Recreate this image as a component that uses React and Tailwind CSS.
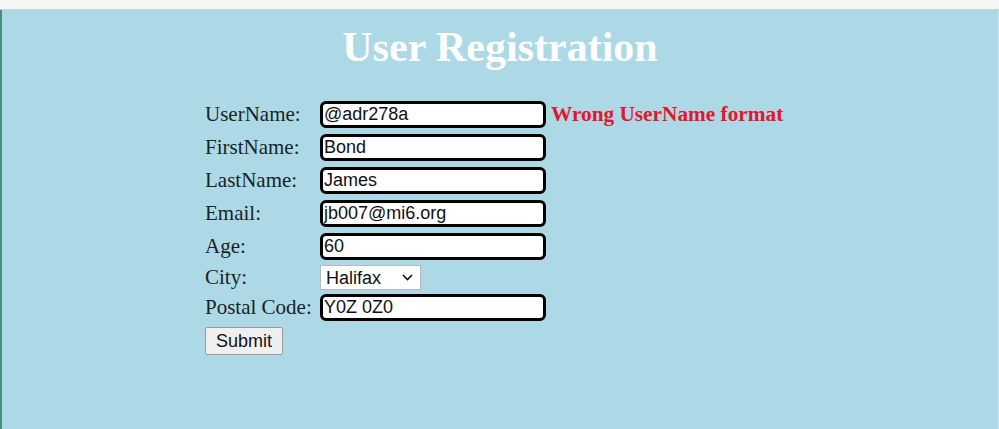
import React from "react";

const serif = { fontFamily: '"Liberation Serif", "Times New Roman", serif' };
const sans = { fontFamily: '"Liberation Sans", Arial, sans-serif' };

function Field({ label, value, height = "h-[33px]", children }) {
  return (
    <div className={`flex items-center ${height}`}>
      <div className="w-[115px] text-[21px] leading-none text-[#182424]" style={serif}>
        {label}
      </div>
      {children ?? (
        <input
          readOnly
          value={value}
          className="w-[226px] h-[27px] border-[3px] border-black rounded-[6px] bg-white px-[1px] text-[18px] text-[#111] outline-none"
          style={sans}
        />
      )}
    </div>
  );
}

export default function App() {
  return (
    <div className="w-[999px] h-[429px] overflow-hidden flex flex-col bg-[#add8e6]">
      <div className="h-[10px] shrink-0 bg-[#f5f5f5] border-b border-[#c9d1d5]" />
      <div className="flex-1 flex flex-col border-l-2 border-[#4b8e76] border-r border-r-[#c8e6ee]">
        <h1
          className="mt-[13px] text-center text-[42px] leading-[48px] font-bold text-[#fdfeff]"
          style={serif}
        >
          User Registration
        </h1>
        <div className="mt-[27px] ml-[203px] flex flex-col">
          <div className="flex items-center h-[33px]">
            <div className="w-[115px] text-[21px] leading-none text-[#182424]" style={serif}>
              UserName:
            </div>
            <input
              readOnly
              value="@adr278a"
              className="w-[226px] h-[27px] border-[3px] border-black rounded-[6px] bg-white px-[1px] text-[18px] text-[#111] outline-none"
              style={sans}
            />
            <span className="ml-[5px] text-[21.3px] leading-none font-bold text-[#e2172c]" style={serif}>
              Wrong UserName format
            </span>
          </div>
          <Field label="FirstName:" value="Bond" />
          <Field label="LastName:" value="James" />
          <Field label="Email:" value="jb007@mi6.org" />
          <Field label="Age:" value="60" />
          <Field label="City:" height="h-[29px]">
            <div className="relative w-[101px] h-[25px] border border-[#b5b9bb] bg-white">
              <select
                defaultValue="Halifax"
                className="appearance-none w-full h-full bg-transparent pl-[5px] text-[18px] leading-none text-[#111] outline-none"
                style={sans}
              >
                <option>Halifax</option>
                <option>Toronto</option>
                <option>Montreal</option>
              </select>
              <svg
                className="absolute right-[7px] top-[8px] pointer-events-none"
                width="11"
                height="7"
                viewBox="0 0 11 7"
                fill="none"
              >
                <path d="M1 1l4.5 4.5L10 1" stroke="#111" strokeWidth="1.6" />
              </svg>
            </div>
          </Field>
          <Field label="Postal Code:" value="Y0Z 0Z0" height="h-[31px]" />
          <div className="flex items-center h-[36px]">
            <button
              className="w-[78px] h-[28px] bg-[#efefef] border border-[#9a9a9a] rounded-[2px] text-[18px] leading-none text-[#111]"
              style={sans}
            >
              Submit
            </button>
          </div>
        </div>
      </div>
    </div>
  );
}
